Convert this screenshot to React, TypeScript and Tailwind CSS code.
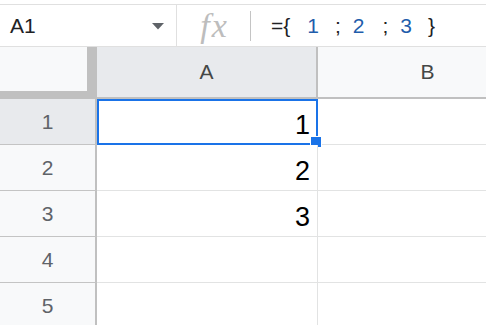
import React from "react";

const font = { fontFamily: '"Liberation Sans", Arial, sans-serif' };

function RowHeader({ n, selected }: { n: number; selected?: boolean }) {
  return (
    <div
      className={`w-[97px] h-[46px] shrink-0 flex items-center justify-center border-r-2 border-b border-r-[#c0c0c0] border-b-[#c4c4c4] text-[21px] text-[#5f6368] ${
        selected ? "bg-[#e8eaed]" : "bg-[#f8f9fa]"
      }`}
    >
      {n}
    </div>
  );
}

function Row({ n, value, selected }: { n: number; value?: string; selected?: boolean }) {
  return (
    <div className="flex w-[540px]">
      <RowHeader n={n} selected={selected} />
      <div className="relative w-[221px] h-[46px] shrink-0 border-r border-b border-[#e2e3e3] bg-white flex items-end justify-end pr-[7px] pb-[5px] text-[27px] leading-none text-black">
        {value}
        {selected && (
          <>
            <div className="absolute left-0 top-0 right-[-1px] bottom-[-1px] border-2 border-[#1a73e8] pointer-events-none" />
            <div className="absolute left-[213px] top-[37px] w-[12px] h-[12px] bg-[#1a73e8] border border-white" />
          </>
        )}
      </div>
      <div className="w-[221px] shrink-0 h-[46px] border-b border-r border-[#e2e3e3] bg-white" />
    </div>
  );
}

export default function App() {
  return (
    <div className="w-[486px] h-[325px] overflow-hidden bg-white" style={font}>
      <div className="h-[4px] bg-white" />
      {/* formula bar */}
      <div className="h-[43px] flex border-y border-[#e0e0e0] bg-white">
        <div className="w-[177px] shrink-0 flex items-center pl-[10px] pr-[12px] border-r border-[#e0e0e0]">
          <span className="text-[21px] text-[#202124] leading-none">A1</span>
          <span className="flex-1" />
          <svg width="12" height="7" viewBox="0 0 12 7" className="mt-[2px]">
            <path d="M0 0 L12 0 L6 6.5 Z" fill="#5f6368" />
          </svg>
        </div>
        <div className="w-[73px] shrink-0 flex items-center justify-center pl-[2px]">
          <span
            className="italic text-[34px] leading-none text-[#bdbdbd] tracking-[2px]"
            style={{ fontFamily: '"Liberation Serif", "Times New Roman", serif' }}
          >
            fx
          </span>
        </div>
        <div className="w-px h-[30px] self-center bg-[#c4c4c4]" />
        <div className="flex items-center pl-[20px] text-[21px] leading-none text-[#202124] whitespace-pre">
          <span>=</span>
          <span>{"{"}</span>
          <span className="ml-[17px] text-[#1f5dab]">1</span>
          <span className="ml-[16px]">;</span>
          <span className="ml-[12px] text-[#1f5dab]">2</span>
          <span className="ml-[18px]">;</span>
          <span className="ml-[12px] text-[#1f5dab]">3</span>
          <span className="ml-[16px]">{"}"}</span>
        </div>
      </div>
      {/* column headers */}
      <div className="flex w-[540px] h-[52px] border-b-2 border-[#c0c0c0]">
        <div className="w-[97px] shrink-0 bg-[#f8f9fa] border-r-[10px] border-b-[6px] border-[#c0c0c0]" />
        <div className="w-[221px] shrink-0 bg-[#e8eaed] border-r-2 border-[#c0c0c0] flex items-center justify-center text-[21px] text-[#444746]">
          A
        </div>
        <div className="w-[221px] shrink-0 bg-[#f8f9fa] border-r-2 border-[#c0c0c0] flex items-center justify-center text-[21px] text-[#444746]">
          B
        </div>
      </div>
      <Row n={1} value="1" selected />
      <Row n={2} value="2" />
      <Row n={3} value="3" />
      <Row n={4} />
      <Row n={5} />
    </div>
  );
}
